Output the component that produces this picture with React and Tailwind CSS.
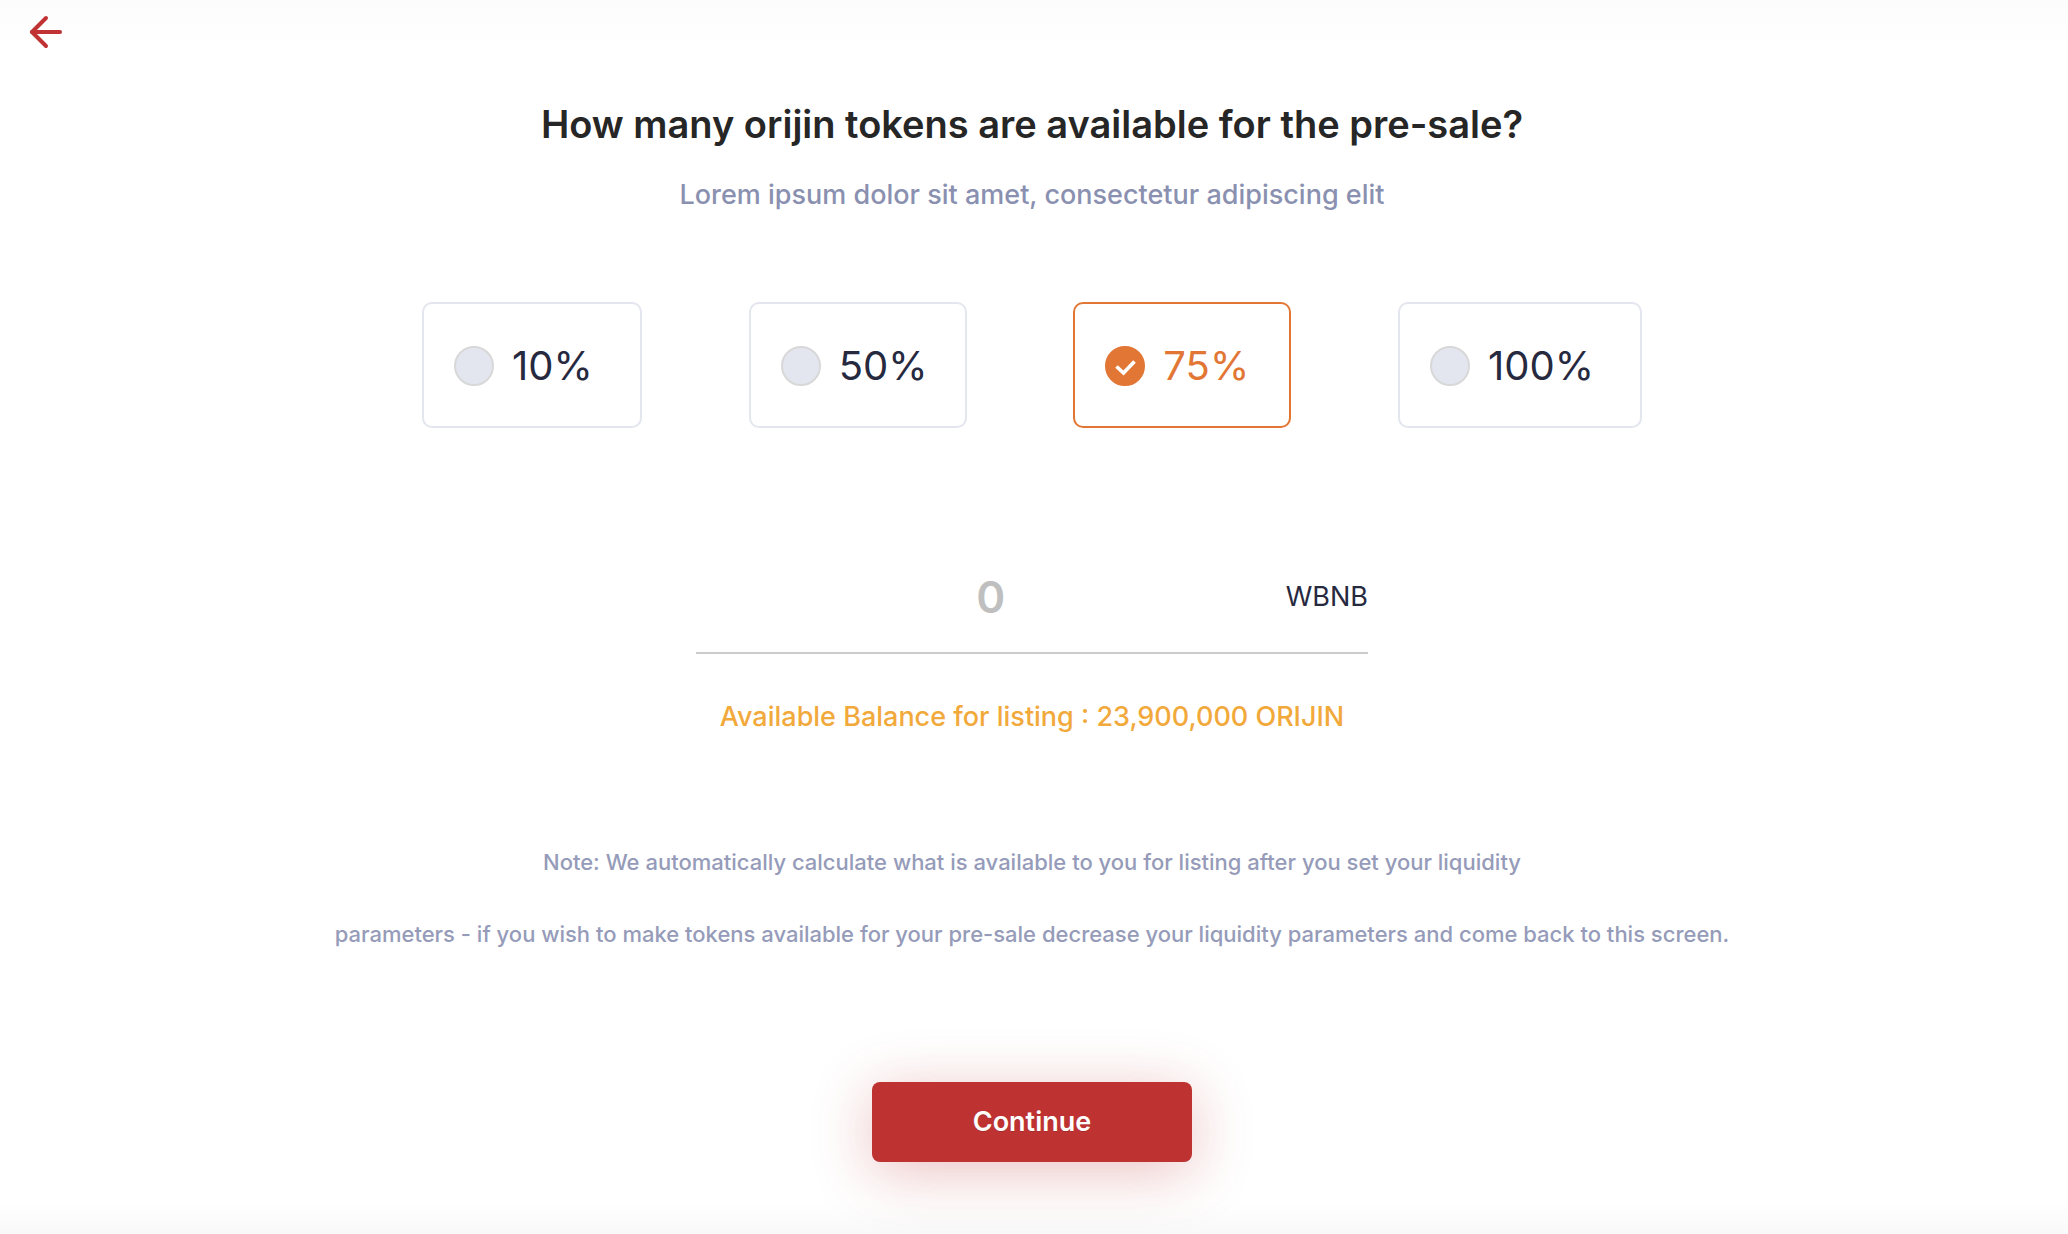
import { useState } from 'react';
import { ArrowLeft } from 'lucide-react';
import clsx from 'clsx';

const shares = ['10%', '50%', '75%', '100%'];

function ShareOption({ label, checked, onSelect }) {
  return (
    <label
      className={clsx(
        'flex items-center gap-[18px] h-[126px] pt-0.5 pl-[30px] rounded-[10px] border-2 cursor-pointer text-[40px] leading-[48px]',
        checked ? 'border-[#e27635] text-[#e27635]' : 'border-[#e4e6ee] text-[#27293f]'
      )}
    >
      <span className="grid place-items-center">
        <input
          type="radio"
          name="share"
          value={label}
          checked={checked}
          onChange={onSelect}
          className="col-start-1 row-start-1 appearance-none size-10 rounded-full border-2 border-[#d8d8d8] bg-[#e3e6ee] checked:border-[#e27635] checked:bg-[#e27635]"
        />
        {checked && (
          <svg viewBox="0 0 40 40" className="col-start-1 row-start-1 size-10 pointer-events-none" fill="none" aria-hidden="true">
            <path d="M11.5 20.5 L18.5 27 L29.5 15.5" stroke="#fff" strokeWidth="3.7" />
          </svg>
        )}
      </span>
      {label}
    </label>
  );
}

export default function App() {
  const [share, setShare] = useState('75%');
  const [amount, setAmount] = useState('');

  return (
    <div className="min-h-screen flex flex-col pr-1 bg-[linear-gradient(to_bottom,#fcfcfc,#fff_48px,#fff_calc(100%-32px),#f9f9f9)] font-['Inter',sans-serif]">
      <header className="h-16 px-[22px] flex items-center">
        <button type="button" aria-label="Go back" className="text-[#c03233]">
          <ArrowLeft size={48} strokeWidth={2} />
        </button>
      </header>

      <main className="flex flex-col items-center px-6 text-center">
        <h1 className="mt-9 text-[38px] leading-[48px] font-semibold text-[#262626]">
          How many orijin tokens are available for the pre-sale?
        </h1>
        <p className="mt-7 text-[27px] leading-[38px] font-medium text-[#8a90b0]">
          Lorem ipsum dolor sit amet, consectetur adipiscing elit
        </p>

        <fieldset
          aria-label="Share of tokens for the pre-sale"
          className="mt-[88px] w-full max-w-[1220px] grid grid-cols-2 gap-y-6 gap-x-6 lg:gap-x-0 lg:justify-between lg:grid-cols-[220px_218px_218px_244px]"
        >
          {shares.map((item) => (
            <ShareOption key={item} label={item} checked={item === share} onSelect={() => setShare(item)} />
          ))}
        </fieldset>

        <div className="mt-[114px] w-full max-w-[672px] h-28 flex items-center border-b-2 border-[#cbcbcb]">
          <input
            id="amount"
            type="text"
            inputMode="decimal"
            placeholder="0"
            value={amount}
            onChange={(e) => setAmount(e.target.value)}
            className="flex-1 min-w-0 text-center text-[44px] leading-[56px] font-semibold text-[#27293f] placeholder:text-[#bfbfbf] outline-none"
          />
          <label htmlFor="amount" className="text-[27px] leading-[38px] text-[#27293f]">
            WBNB
          </label>
        </div>

        <p className="mt-11 text-[27px] leading-[38px] font-medium text-[#f2a93b]">
          Available Balance for listing : 23,900,000 ORIJIN
        </p>

        <p className="mt-[90px] text-[22px] leading-[72px] font-medium text-[#959bb9]">
          Note: We automatically calculate what is available to you for listing after you set your liquidity
          <br />
          parameters - if you wish to make tokens available for your pre-sale decrease your liquidity parameters and
          come back to this screen.
        </p>

        <button
          type="button"
          className="mt-28 h-20 w-80 rounded-lg bg-[#be3332] text-[27px] leading-[38px] font-semibold text-white text-shadow-2xs shadow-[0_10px_60px_rgba(190,51,50,0.3)]"
        >
          Continue
        </button>
      </main>
    </div>
  );
}
